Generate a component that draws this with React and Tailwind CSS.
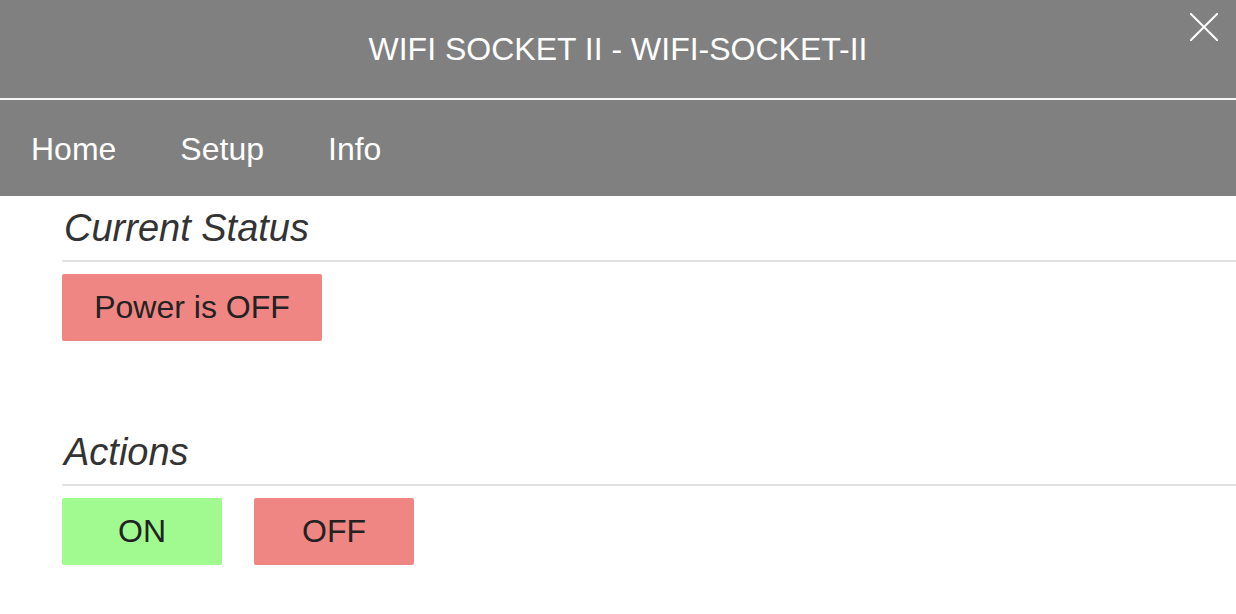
import React from 'react';

// Section heading with the thin rule under it
const Section = ({ title, className, children }) => (
  <section className={className}>
    <h2 className="h-[43px] pl-[2px] text-[38px] italic leading-[43px] text-[#333]">{title}</h2>
    <div className="mt-[10px] h-[2px] bg-[#e2e2e2]" />
    <div className="mt-[12px] flex gap-8">{children}</div>
  </section>
);

function App() {
  return (
    <div className="min-h-[614px] bg-white font-['Liberation_Sans',Arial,sans-serif]">
      {/* Header */}
      <header className="relative flex h-[98px] items-center justify-center bg-[#808080]">
        <h1 className="text-[32px] text-white">WIFI SOCKET II - WIFI-SOCKET-II</h1>
        <button className="absolute right-[18px] top-[13px] h-[28px] w-[28px]" aria-label="Close">
          <svg viewBox="0 0 28 28" width="28" height="28" stroke="white" strokeWidth="2">
            <line x1="0" y1="0" x2="28" y2="28" />
            <line x1="28" y1="0" x2="0" y2="28" />
          </svg>
        </button>
      </header>
      <div className="h-[2px] bg-[#f4f4f4]" />

      {/* Nav */}
      <nav className="flex h-[96px] items-center bg-[#808080] pl-[31px] pt-[2px]">
        <a href="#" className="pr-[64px] text-[32px] text-white">Home</a>
        <a href="#" className="pr-[64px] text-[32px] text-white">Setup</a>
        <a href="#" className="text-[32px] text-white">Info</a>
      </nav>

      {/* Main Content */}
      <main className="pl-[62px]">
        <Section title="Current Status" className="pt-[11px]">
          <div className="flex h-[67px] w-[260px] items-center justify-center rounded-[2px] bg-[#f08683] pb-[2px] text-[32px] text-[#222]">
            Power is OFF
          </div>
        </Section>

        <Section title="Actions" className="mt-[90px]">
          <button className="h-[67px] w-[160px] rounded-[2px] bg-[#a0fa90] pb-[2px] text-[32px] text-[#222]">ON</button>
          <button className="h-[67px] w-[160px] rounded-[2px] bg-[#f08683] pb-[2px] text-[32px] text-[#222]">OFF</button>
        </Section>
      </main>
    </div>
  );
}

export default App;
